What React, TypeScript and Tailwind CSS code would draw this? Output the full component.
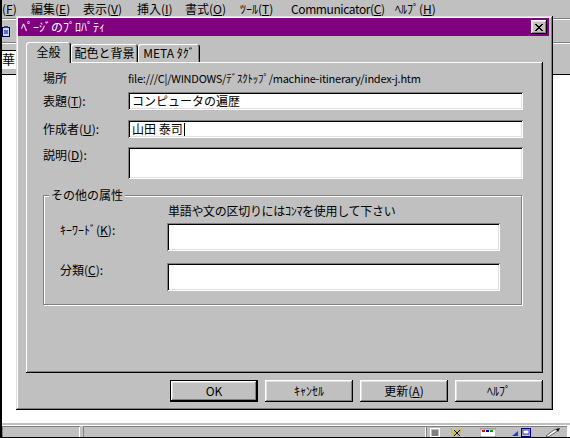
import React from "react";

const raised =
  "shadow-[inset_-1px_-1px_#000,inset_1px_1px_#fff,inset_-2px_-2px_#808080,inset_2px_2px_#dfdfdf]";
const sunken =
  "shadow-[inset_1px_1px_#808080,inset_-1px_-1px_#fff,inset_2px_2px_#000,inset_-2px_-2px_#dfdfdf]";

function U({ c }: { c: string }) {
  return <span className="underline underline-offset-[1px] decoration-1">{c}</span>;
}

function Menu() {
  const items: { pre: string; k: string; w: string }[] = [
    { pre: "", k: "F", w: "w-[29px]" },
    { pre: "編集", k: "E", w: "w-[52px]" },
    { pre: "表示", k: "V", w: "w-[54px]" },
    { pre: "挿入", k: "I", w: "w-[48px]" },
    { pre: "書式", k: "O", w: "w-[55px]" },
    { pre: "ﾂｰﾙ", k: "T", w: "w-[51px]" },
    { pre: "Communicator", k: "C", w: "w-[104px] tracking-[-0.4px]" },
    { pre: "ﾍﾙﾌﾟ", k: "H", w: "w-[60px]" },
  ];
  return (
    <div className="h-[18px] bg-[#c0c0c0] flex items-start shrink-0 whitespace-nowrap leading-[17px] -mt-[1px]">
      {items.map((it, i) => (
        <span key={i} className={`${it.w} shrink-0`}>
          {it.pre}(<U c={it.k} />)
        </span>
      ))}
    </div>
  );
}

function StatusBar() {
  return (
    <div className="h-[15px] flex flex-col shrink-0">
      <div className="h-[2px] bg-[#c0c0c0]" />
      <div className="h-[2px] bg-white" />
      <div className="flex-1 flex bg-white">
        <div className="flex-1 flex bg-[#c0c0c0]">
          <div className="w-[78px] shadow-[inset_1px_1px_#808080,inset_-1px_0_#fff]" />
          <div className="w-[3px]" />
          <div className="w-[343px] shadow-[inset_1px_1px_#808080,inset_-1px_0_#fff]" />
          <div className="flex-1 flex items-start shadow-[inset_1px_1px_#808080] pl-[4px] pt-[2px]">
            <svg width="10" height="9" viewBox="0 0 10 9">
              <rect x="0.5" y="0.5" width="9" height="8" fill="#c0c0c0" stroke="#fff" />
              <path d="M2 3h6M2 5h6M2 7h6" stroke="#404040" />
            </svg>
            <svg width="14" height="9" viewBox="0 0 14 9" className="ml-[10px]">
              <path d="M1 1l3 7 2-5 2 5 3-7" stroke="#d0c000" strokeWidth="1.5" fill="none" />
              <path d="M4 2l6 6M10 2l-6 6" stroke="#0000a0" strokeWidth="1" />
            </svg>
            <svg width="16" height="9" viewBox="0 0 16 9" className="ml-[16px]">
              <rect x="0" y="1" width="16" height="8" fill="#fff" stroke="#808080" />
              <rect x="2" y="2" width="3" height="2" fill="#e00000" />
              <rect x="6" y="2" width="3" height="2" fill="#0000c0" />
              <rect x="10" y="2" width="3" height="2" fill="#00a000" />
            </svg>
            <svg width="22" height="9" viewBox="0 0 22 9" className="ml-[16px]">
              <path d="M0 8l6-5v5z" fill="#2040c0" />
              <rect x="9.5" y="0.5" width="9" height="8" fill="#c0c0c0" stroke="#0000a0" />
              <rect x="11" y="2" width="6" height="4" fill="#fff" stroke="#0000a0" strokeWidth="0.7" />
            </svg>
            <svg width="18" height="9" viewBox="0 0 18 9" className="ml-[10px]">
              <path d="M2 8l8-6 4-1-2 3-8 5z" fill="#fff" stroke="#404040" strokeWidth="0.8" />
              <path d="M12 1l4-1-2 4" fill="#000" />
            </svg>
          </div>
        </div>
        <div className="w-[3px] bg-white" />
      </div>
      <div className="h-[1px] bg-black" />
    </div>
  );
}

function Field({ h, children }: { h: string; children?: React.ReactNode }) {
  return (
    <div className={`${h} bg-white ${sunken} flex items-center pl-[4px] whitespace-nowrap leading-[16px]`}>
      {children}
    </div>
  );
}

function Button({ label, def }: { label: React.ReactNode; def?: boolean }) {
  return (
    <div className={`w-[88px] h-[22px] flex ${def ? "border border-black" : ""}`}>
      <div className={`w-full h-full flex items-center justify-center leading-[16px] ${raised}`}>{label}</div>
    </div>
  );
}

const tabShadow = "shadow-[inset_1px_1px_#fff,inset_-1px_0_#000,inset_-2px_0_#808080]";

function Dialog() {
  return (
    <div className="absolute left-[16px] top-[16px] w-[537px] h-[394px] bg-[#c0c0c0] shadow-[inset_-1px_-1px_#000,inset_1px_1px_#dfdfdf,inset_-2px_-2px_#808080,inset_2px_2px_#fff] pl-[2px] pt-[2px] pr-[2px] flex flex-col">
      {/* title bar */}
      <div className="h-[18px] mr-[2px] bg-[#800080] flex items-center justify-between pl-[3px] pr-[2px] shrink-0">
        <span className="text-white leading-[16px]">ﾍﾟｰｼﾞのﾌﾟﾛﾊﾟﾃｨ</span>
        <div className={`w-[16px] h-[14px] bg-[#c0c0c0] ${raised} flex items-center justify-center`}>
          <svg width="8" height="7" viewBox="0 0 8 7" shapeRendering="crispEdges">
            <path
              d="M0 0h2v1h1v1h2v-1h1v-1h2v1h-1v1h-1v1h-1v1h1v1h1v1h1v1h-2v-1h-1v-1h-2v1h-1v1h-2v-1h1v-1h1v-1h1v-1h-1v-1h-1v-1h-1z"
              fill="#000"
            />
          </svg>
        </div>
      </div>

      <div className="flex-1 flex flex-col px-[8px]">
        {/* tabs */}
        <div className="mt-[6px] h-[20px] flex items-end shrink-0 leading-[16px]">
          <div className={`relative z-10 w-[45px] h-[21px] -mb-[1px] bg-[#c0c0c0] rounded-t-[3px] ${tabShadow} flex items-center justify-center pb-[1px]`}>
            全般
          </div>
          <div className={`w-[67px] h-[18px] bg-[#c0c0c0] rounded-t-[3px] ${tabShadow} flex items-center justify-center`}>
            配色と背景
          </div>
          <div className={`w-[62px] h-[18px] bg-[#c0c0c0] rounded-t-[3px] ${tabShadow} flex items-center justify-center`}>
            META ﾀｸﾞ
          </div>
        </div>

        {/* panel */}
        <div className="h-[311px] shrink-0 shadow-[inset_-1px_-1px_#000,inset_1px_1px_#fff,inset_-2px_-2px_#808080] pt-[8px] pl-[17px] pr-[20px] flex flex-col leading-[16px]">
          <div className="h-[16px] flex items-center">
            <div className="w-[85px] shrink-0">場所</div>
            <div className="whitespace-nowrap text-[11px] tracking-[-0.25px]">
              file:///C|/WINDOWS/ﾃﾞｽｸﾄｯﾌﾟ/machine-itinerary/index-j.htm
            </div>
          </div>
          <div className="mt-[6px] h-[18px] flex items-center">
            <div className="w-[85px] shrink-0">
              表題(<U c="T" />):
            </div>
            <div className="flex-1">
              <Field h="h-[18px]">コンピュータの遍歴</Field>
            </div>
          </div>
          <div className="mt-[10px] h-[18px] flex items-center">
            <div className="w-[85px] shrink-0">
              作成者(<U c="U" />):
            </div>
            <div className="flex-1">
              <Field h="h-[18px]">
                山田 泰司
                <span className="inline-block w-[1px] h-[13px] bg-black ml-[1px]" />
              </Field>
            </div>
          </div>
          <div className="mt-[9px] h-[32px] flex items-start">
            <div className="w-[85px] shrink-0">
              説明(<U c="D" />):
            </div>
            <div className="flex-1">
              <Field h="h-[32px]" />
            </div>
          </div>

          {/* group box */}
          <div className="relative mt-[16px] h-[110px] mr-[1px] border border-[#808080] shadow-[inset_1px_1px_#fff,1px_1px_#fff] pl-[16px] pr-[21px] flex flex-col">
            <span className="absolute -top-[9px] left-[5px] px-[2px] bg-[#c0c0c0] leading-[16px]">
              その他の属性
            </span>
            <div className="mt-[7px] h-[16px] flex items-center pl-[108px] whitespace-nowrap tracking-[-0.3px]">
              単語や文の区切りにはｺﾝﾏを使用して下さい
            </div>
            <div className="mt-[4px] h-[28px] flex items-start">
              <div className="w-[107px] shrink-0 mt-[-1px]">
                ｷｰﾜｰﾄﾞ(<U c="K" />):
              </div>
              <div className="flex-1">
                <Field h="h-[28px]" />
              </div>
            </div>
            <div className="mt-[12px] h-[28px] flex items-start">
              <div className="w-[107px] shrink-0 mt-[-1px]">
                分類(<U c="C" />):
              </div>
              <div className="flex-1">
                <Field h="h-[28px]" />
              </div>
            </div>
          </div>
        </div>

        {/* buttons */}
        <div className="mt-[7px] flex justify-end gap-[7px] shrink-0">
          <Button def label="OK" />
          <Button label="ｷｬﾝｾﾙ" />
          <Button
            label={
              <span>
                更新(<U c="A" />)
              </span>
            }
          />
          <Button label="ﾍﾙﾌﾟ" />
        </div>
      </div>
    </div>
  );
}

export default function App() {
  return (
    <div className="relative w-[570px] h-[438px] overflow-hidden flex bg-white font-['Noto_Sans_CJK_JP','Noto_Sans',sans-serif] text-[12px] leading-[14px] text-black">
      <div className="w-[2px] bg-black shrink-0" />
      <div className="flex-1 flex flex-col">
        <div className="h-[18px] shrink-0 bg-[#c0c0c0] pt-[1px]">
          <Menu />
        </div>
        <div className="h-[56px] bg-[#c0c0c0] flex flex-col shrink-0">
          <div className="h-[1px] bg-[#808080]" />
          <div className="h-[1px] bg-white" />
          <div className="h-[22px] flex items-center">
            <svg width="8" height="11" viewBox="0 0 8 11">
              <rect x="0.5" y="1.5" width="7" height="9" fill="#c0d8ff" stroke="#000080" />
              <rect x="2" y="0" width="4" height="2" fill="#404040" />
              <path d="M2 5h4M2 7h4" stroke="#000080" />
            </svg>
          </div>
          <div className="h-[1px] bg-[#808080]" />
          <div className="h-[1px] bg-white" />
          <div className="flex-1 flex items-center">
            <div className="w-[30px] h-[19px] bg-white shadow-[inset_0_1px_#000] flex items-center">
              <span className="text-[13px] leading-[16px]">華</span>
            </div>
          </div>
        </div>
        <div className="h-[1px] bg-black shrink-0" />
        <div className="flex-1 bg-white" />
        <StatusBar />
      </div>
      <Dialog />
    </div>
  );
}
